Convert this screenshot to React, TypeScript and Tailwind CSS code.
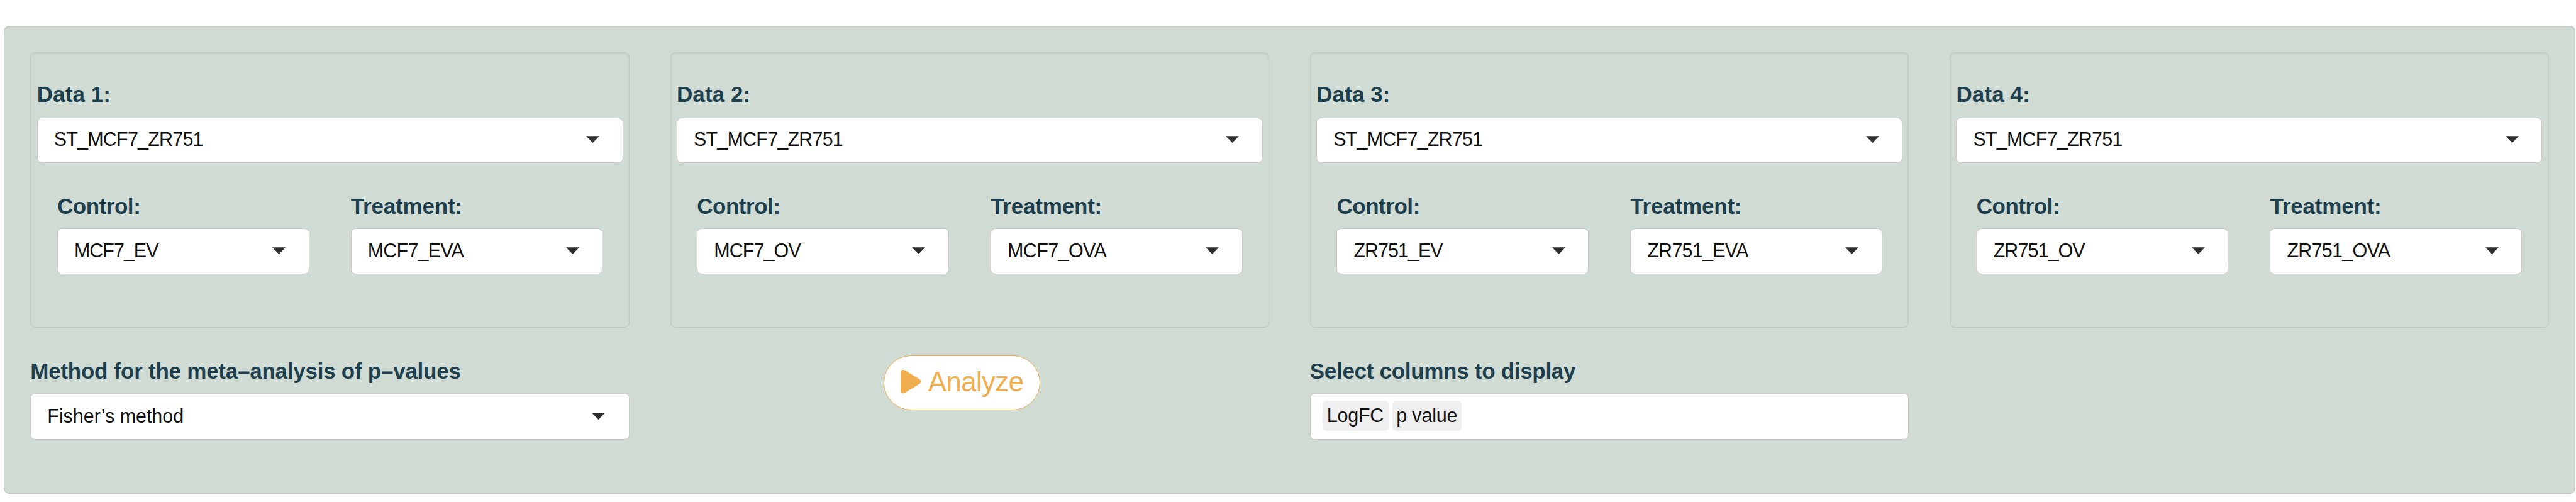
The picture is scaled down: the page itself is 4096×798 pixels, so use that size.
type Option = { text: string; tracking: string };
type DataSet = { title: string; source: Option; control: Option; treatment: Option };

const SOURCE: Option = { text: 'ST_MCF7_ZR751', tracking: 'tracking-[-0.8px]' };

const DATA_SETS: DataSet[] = [
  {
    title: 'Data 1:',
    source: SOURCE,
    control: { text: 'MCF7_EV', tracking: 'tracking-[-1px]' },
    treatment: { text: 'MCF7_EVA', tracking: 'tracking-[-0.8px]' },
  },
  {
    title: 'Data 2:',
    source: SOURCE,
    control: { text: 'MCF7_OV', tracking: 'tracking-[-0.9px]' },
    treatment: { text: 'MCF7_OVA', tracking: 'tracking-[-0.6px]' },
  },
  {
    title: 'Data 3:',
    source: SOURCE,
    control: { text: 'ZR751_EV', tracking: 'tracking-[-1px]' },
    treatment: { text: 'ZR751_EVA', tracking: 'tracking-[-0.75px]' },
  },
  {
    title: 'Data 4:',
    source: SOURCE,
    control: { text: 'ZR751_OV', tracking: 'tracking-[-0.95px]' },
    treatment: { text: 'ZR751_OVA', tracking: 'tracking-[-0.75px]' },
  },
];

const BOX = 'rounded-[8px] border border-[#cbcccb] bg-white';

function Label({ text, tracking }: Option) {
  return (
    <div className={`h-10 whitespace-nowrap text-[35px] leading-10 font-bold text-[#1d3f4e] ${tracking}`}>{text}</div>
  );
}

function Select({ option, className }: { option: Option; className: string }) {
  return (
    <div className={`flex items-start justify-between pl-[26px] ${BOX} ${className}`}>
      <span className={`whitespace-nowrap text-[30.5px] leading-10 text-[#111] ${option.tracking}`}>{option.text}</span>
      <svg className="mt-[15px] h-[11px] w-[21px]" viewBox="0 0 21 11">
        <path d="M0 0.3H21L10.5 10.9Z" fill="#2e2e2e" />
      </svg>
    </div>
  );
}

function DataWell({ data }: { data: DataSet }) {
  return (
    <section className="h-[438px] rounded-[8px] border border-[#bdcbc1] px-[9.4px] pt-[46px] shadow-[inset_0_2px_3px_rgba(0,0,0,0.07)]">
      <Label text={data.title} tracking="tracking-[0.1px]" />
      <Select option={data.source} className="mt-[17px] h-[72px] pt-[13px] pr-[36.5px]" />
      <div className="mt-[49px] grid grid-cols-2 gap-[66.2px] px-[32.2px]">
        <div>
          <Label text="Control:" tracking="tracking-[-0.45px]" />
          <Select option={data.control} className="mt-[15px] h-[73px] pt-[14px] pr-[36.5px]" />
        </div>
        <div>
          <Label text="Treatment:" tracking="tracking-[-0.18px]" />
          <Select option={data.treatment} className="mt-[15px] h-[73px] pt-[14px] pr-[36.5px]" />
        </div>
      </div>
    </section>
  );
}

function Chip({ text, tracking, className }: Option & { className: string }) {
  return (
    <span
      className={`h-[48px] rounded-[6px] bg-[#efefef] pt-[3px] text-[30.5px] leading-10 whitespace-nowrap text-[#111] ${tracking} ${className}`}
    >
      {text}
    </span>
  );
}

export default function App() {
  return (
    <div className="h-[798px] w-[4096px] overflow-hidden bg-white pt-[41px] pl-[6px] font-['Liberation_Sans',Arial,sans-serif]">
      <main className="h-[744px] w-[4089px] rounded-[8px] border border-[#bdcbc1] bg-[#d0dbd3] px-[41.3px] pt-[41px] shadow-[inset_0_2px_3px_rgba(0,0,0,0.07)]">
        <div className="grid grid-cols-4 gap-x-[64.6px]">
          {DATA_SETS.map((data) => (
            <DataWell key={data.title} data={data} />
          ))}
        </div>

        <div className="grid grid-cols-4 gap-x-[64.6px]">
          <div className="pt-[49px]">
            <Label text="Method for the meta–analysis of p–values" tracking="tracking-[-0.25px]" />
            <Select
              option={{ text: 'Fisher’s method', tracking: 'tracking-[-0.05px]' }}
              className="mt-[15px] h-[74px] pt-[15px] pr-[38px]"
            />
          </div>

          <div className="pt-[44px] pl-[339.4px]">
            <button
              type="button"
              className="flex h-[87px] w-[249px] items-start rounded-full border border-[#f0ad4e] bg-white pl-[25.6px] text-[#f0ad4e]"
            >
              <svg className="mt-[18.7px] h-[43px] w-[32.3px]" viewBox="0 0 384 512" fill="currentColor">
                <path d="M73 39c-14.8-9.1-33.4-9.4-48.5-.9S0 62.6 0 80V432c0 17.4 9.4 33.4 24.5 41.9s33.7 8.1 48.5-.9L361 297c14.3-8.7 23-24.2 23-41s-8.7-32.2-23-41L73 39z" />
              </svg>
              <span className="mt-[11px] ml-[12px] text-[43.7px] leading-[60px] tracking-[-0.55px]">Analyze</span>
            </button>
          </div>

          <div className="pt-[49px]">
            <Label text="Select columns to display" tracking="tracking-[-0.3px]" />
            <div className={`mt-[15px] flex h-[74px] gap-[6px] pt-[11px] pl-[19.5px] ${BOX}`}>
              <Chip text="LogFC" tracking="tracking-[-0.25px]" className="w-[104.5px] pl-[6.5px]" />
              <Chip text="p value" tracking="tracking-[-0.2px]" className="w-[110.5px] pl-[6.5px]" />
            </div>
          </div>
        </div>
      </main>
    </div>
  );
}
